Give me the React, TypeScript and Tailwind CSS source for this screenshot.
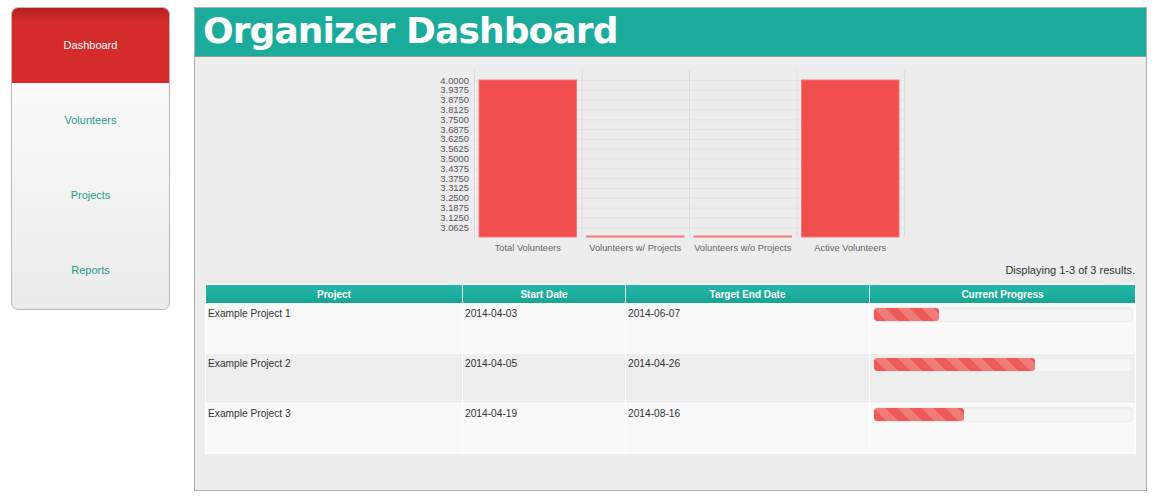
import React from "react";

const navItems = ["Dashboard", "Volunteers", "Projects", "Reports"];

const rows = [
  { name: "Example Project 1", start: "2014-04-03", end: "2014-06-07", pct: 25 },
  { name: "Example Project 2", start: "2014-04-05", end: "2014-04-26", pct: 62.5 },
  { name: "Example Project 3", start: "2014-04-19", end: "2014-08-16", pct: 35 },
];

const yLabels = [
  "4.0000", "3.9375", "3.8750", "3.8125", "3.7500", "3.6875", "3.6250", "3.5625",
  "3.5000", "3.4375", "3.3750", "3.3125", "3.2500", "3.1875", "3.1250", "3.0625",
];

const cats = ["Total Volunteers", "Volunteers w/ Projects", "Volunteers w/o Projects", "Active Volunteers"];
const vals = [4, 3, 3, 4];

function Chart() {
  const left = 63;
  const right = 493;
  const top = 20;
  const bottom = 177;
  const step = (bottom - top) / 16;
  const catW = (right - left) / 4;
  return (
    <svg width="520" height="203" className="block mx-auto" style={{ fontFamily: "'Liberation Sans', Arial, sans-serif" }}>
      {yLabels.map((l, i) => (
        <line key={"h" + i} x1={left} x2={right} y1={top + i * step + 0.5} y2={top + i * step + 0.5} stroke="#e3e3e3" strokeWidth="1" />
      ))}
      {[0, 1, 2, 3, 4].map((i) => (
        <line key={"v" + i} x1={left + i * catW + 0.5} x2={left + i * catW + 0.5} y1={10} y2={i === 0 ? 180 : bottom} stroke="#dcdcdc" strokeWidth="1" />
      ))}
      {yLabels.map((l, i) => (
        <text key={l} x={58} y={top + i * step + 3.5} textAnchor="end" fontSize="9.4" fill="#555">
          {l}
        </text>
      ))}
      {vals.map((v, i) => {
        const x = left + i * catW + 5;
        const w = catW - 10;
        const y = v === 4 ? top : bottom - 1;
        return (
          <rect key={"b" + i} x={x} y={y} width={w} height={bottom - y} fill="#f04d4d" stroke="#f27a7a" strokeWidth="1" />
        );
      })}
      {cats.map((c, i) => (
        <text key={c} x={left + i * catW + catW / 2} y={191} textAnchor="middle" fontSize="9.3" fill="#666">
          {c}
        </text>
      ))}
    </svg>
  );
}

export default function App() {
  return (
    <div className="flex items-start gap-[24px] pt-[7px] pl-[11px] bg-white min-h-[498px]" style={{ fontFamily: "'Liberation Sans', Arial, sans-serif" }}>
      <nav className="w-[159px] shrink-0 rounded-[7px] border border-[#b8b8b8] overflow-hidden bg-linear-to-b from-white to-[#ebebeb]">
        {navItems.map((n, i) => (
          <div
            key={n}
            className={
              i === 0
                ? "h-[75px] flex items-center justify-center text-[11px] text-white bg-linear-to-b from-[#b52121] via-[#d62b2b] via-[20%] to-[#d62b2b]"
                : i === 3
                ? "h-[76px] pb-px flex items-center justify-center text-[11px] text-[#2a9a8c]"
                : "h-[75px] flex items-center justify-center text-[11px] text-[#2a9a8c]"
            }
          >
            {n}
          </div>
        ))}
      </nav>
      <main className="w-[953px] h-[484px] border border-[#b0b0b0] bg-[#ededed] flex flex-col">
        <header className="h-[49px] bg-[#1aab9b] border-b border-[#9a9a9a] pl-[8px]">
          <h1
            className="text-[36px] leading-[45px] font-bold text-white tracking-[-0.9px]"
            style={{ fontFamily: "'DejaVu Sans', Verdana, sans-serif" }}
          >
            Organizer Dashboard
          </h1>
        </header>
        <div className="pt-[3px] px-[10px]">
          <Chart />
          <div className="h-[14px] text-right text-[11px] leading-[14px] text-[#333] pr-[1px]">Displaying 1-3 of 3 results.</div>
          <div className="mt-[7px] border border-white bg-white">
            <div className="grid grid-cols-[256px_162px_243px_1fr] gap-x-px h-[18px] bg-[#e9f7f5]">
              {["Project", "Start Date", "Target End Date", "Current Progress"].map((h) => (
                <div key={h} className="flex items-center justify-center text-[10px] font-bold text-white bg-linear-to-b from-[#22b8a9] to-[#17a493]">
                  {h}
                </div>
              ))}
            </div>
            {rows.map((r, i) => (
              <div key={r.name} className="grid grid-cols-[256px_162px_243px_1fr] gap-x-px mt-px h-[49px] bg-white">
                {[r.name, r.start, r.end].map((t, j) => (
                  <div key={j} className={(i === 1 ? "bg-[#eeeeee]" : "bg-[#f9f9f9]") + " pl-[2px] pt-[3px] text-[10.2px] leading-[13px] text-[#333]"}>
                    {t}
                  </div>
                ))}
                <div className={(i === 1 ? "bg-[#eeeeee]" : "bg-[#f9f9f9]") + " pl-[3px] pr-[2px] pt-[3px]"}>
                  <div className="h-[15px] rounded-[4px] bg-[#f5f5f5] border border-[#ececec] shadow-[inset_0_1px_2px_rgba(0,0,0,0.05)] overflow-hidden">
                    <div
                      className="h-full rounded-[3px] bg-[#ee5a58] bg-[linear-gradient(45deg,rgba(255,255,255,.2)_25%,transparent_25%,transparent_50%,rgba(255,255,255,.2)_50%,rgba(255,255,255,.2)_75%,transparent_75%,transparent)] bg-size-[24px_24px]"
                      style={{ width: `${r.pct}%` }}
                    />
                  </div>
                </div>
              </div>
            ))}
          </div>
        </div>
      </main>
    </div>
  );
}
